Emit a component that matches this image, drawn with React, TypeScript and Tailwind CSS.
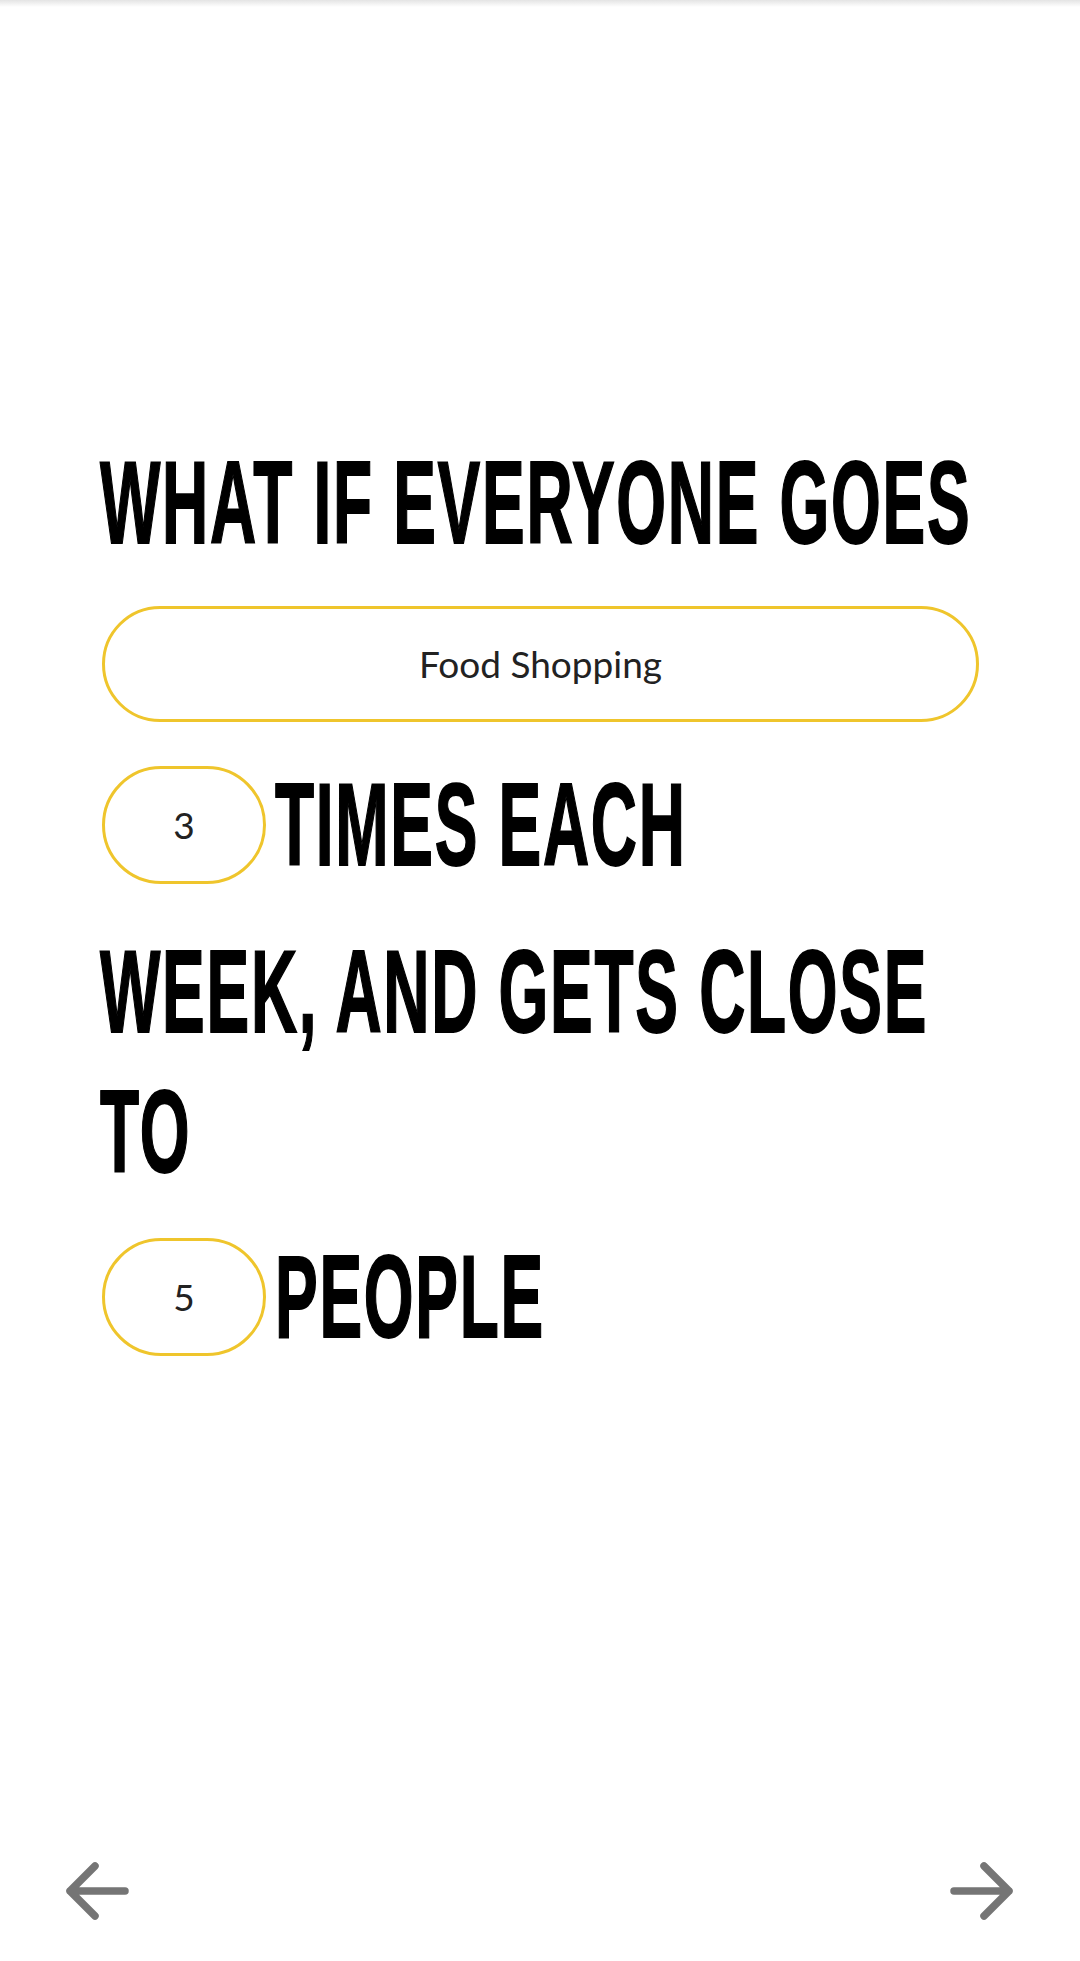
import React from "react";

const heading =
  "inline-block origin-center scale-y-[1.84] whitespace-nowrap text-[64px] tracking-[1.7px] leading-none font-bold uppercase text-black [-webkit-text-stroke:1px_black] [font-family:'Liberation_Sans',Arial,sans-serif]";

function Arrow({ dir }: { dir: "left" | "right" }) {
  const d =
    dir === "left"
      ? "M4 32 L59 32 M29 7 L4 32 L29 57"
      : "M4 32 L59 32 M34 7 L59 32 L34 57";
  return (
    <svg width="64" height="64" viewBox="0 0 64 64" fill="none">
      <path d={d} stroke="#757575" strokeWidth="7.5" strokeLinecap="round" strokeLinejoin="round" />
    </svg>
  );
}

function SmallPill({ value }: { value: string }) {
  return (
    <div className="w-[164px] h-[118px] shrink-0 rounded-full border-[3px] border-[#efc52c] flex items-center justify-center text-[37px] text-[#222222] [font-family:Lato,'Noto_Sans',sans-serif]">
      {value}
    </div>
  );
}

export default function App() {
  return (
    <div className="w-[1080px] h-[1961px] bg-white flex flex-col">
      <div className="h-[7px] bg-gradient-to-b from-[#e4e4e4] to-white" />
      <div className="pt-[426px] pl-[100px] pr-[100px] flex flex-col">
        <div className="h-[140px] flex items-center">
          <span className={heading}>What if everyone goes</span>
        </div>
        <div className="mt-[33px] ml-[2px] w-[877px] h-[116px] rounded-full border-[3px] border-[#efc52c] flex items-center justify-center text-[37px] text-[#222222] [font-family:Lato,'Noto_Sans',sans-serif]">
          Food Shopping
        </div>
        <div className="mt-[44px] ml-[2px] h-[118px] flex items-center gap-[9px]">
          <SmallPill value="3" />
          <span className={heading}>times each</span>
        </div>
        <div className="mt-[38px] h-[140px] flex items-center">
          <span className={heading}>week, and gets close</span>
        </div>
        <div className="h-[140px] flex items-center">
          <span className={heading}>to</span>
        </div>
        <div className="mt-[36px] ml-[2px] h-[118px] flex items-center gap-[9px]">
          <SmallPill value="5" />
          <span className={heading}>people</span>
        </div>
      </div>
      <div className="mt-auto mb-[38px] px-[66px] flex justify-between items-center">
        <Arrow dir="left" />
        <Arrow dir="right" />
      </div>
    </div>
  );
}
